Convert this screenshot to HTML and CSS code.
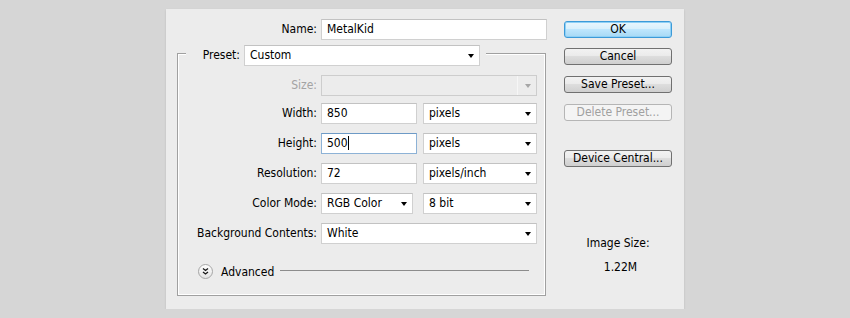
FILE: index.html
```html
<!DOCTYPE html>
<html lang="en">
<head>
  <meta charset="UTF-8">
  <title>New</title>
  <link rel="stylesheet" href="styles.css">
</head>
<body>
  <div class="dialog">
    <div class="main">
      <div class="row name-row">
        <span class="lbl name-lbl">Name:</span>
        <div class="field name-input">MetalKid</div>
      </div>

      <div class="group-head">
        <span class="stub stub-left"></span>
        <span class="lbl preset-lbl">Preset:</span>
        <div class="field select preset-select">Custom<span class="arrow"></span></div>
        <span class="stub stub-right"></span>
      </div>

      <div class="group">
        <div class="row size-row">
          <span class="lbl disabled">Size:</span>
          <div class="field select wide disabled-select"><span class="sep"></span><span class="arrow"></span></div>
        </div>
        <div class="row">
          <span class="lbl">Width:</span>
          <div class="field num">850</div>
          <div class="field select unit">pixels<span class="arrow"></span></div>
        </div>
        <div class="row">
          <span class="lbl">Height:</span>
          <div class="field num focused">500<span class="caret"></span></div>
          <div class="field select unit">pixels<span class="arrow"></span></div>
        </div>
        <div class="row">
          <span class="lbl">Resolution:</span>
          <div class="field num">72</div>
          <div class="field select unit">pixels/inch<span class="arrow"></span></div>
        </div>
        <div class="row">
          <span class="lbl">Color Mode:</span>
          <div class="field select mode">RGB Color<span class="arrow"></span></div>
          <div class="field select bits">8 bit<span class="arrow"></span></div>
        </div>
        <div class="row">
          <span class="lbl">Background Contents:</span>
          <div class="field select wide">White<span class="arrow"></span></div>
        </div>

        <div class="advanced">
          <svg class="adv-icon" width="15" height="15" viewBox="0 0 15 15">
            <defs>
              <linearGradient id="advfill" x1="0" y1="0" x2="0" y2="1">
                <stop offset="0" stop-color="#ffffff"/>
                <stop offset="1" stop-color="#e2e2e2"/>
              </linearGradient>
            </defs>
            <circle cx="7.5" cy="7.5" r="7" fill="url(#advfill)" stroke="#a5a5a5"/>
            <path d="M5 4.5 L7.5 6.5 L10 4.5 M5 8 L7.5 10 L10 8" fill="none" stroke="#1a1a1a" stroke-width="1.3"/>
          </svg>
          <span class="adv-text">Advanced</span>
          <span class="adv-line"></span>
        </div>
      </div>
    </div>

    <div class="side">
      <div class="btn btn-ok">OK</div>
      <div class="btn">Cancel</div>
      <div class="btn">Save Preset...</div>
      <div class="btn btn-disabled">Delete Preset...</div>
      <div class="btn btn-device">Device Central...</div>

      <div class="image-size">
        <div>Image Size:</div>
        <div class="size-value">1.22M</div>
      </div>
    </div>
  </div>
</body>
</html>
```

FILE: styles.css
```css
body {
  margin: 0;
  padding-top: 9px;
  background-color: #d6d6d6;
  font-family: "DejaVu Sans Condensed", "DejaVu Sans", sans-serif;
  font-stretch: condensed;
  font-size: 12px;
  color: #000;
}

.dialog {
  width: 518px;
  height: 300px;
  margin: 0 auto;
  box-sizing: border-box;
  padding-top: 10px;
  display: flex;
  background-color: #ececec;
  box-shadow: 0 1px 2px rgba(0, 0, 0, 0.12);
}

.main {
  width: 381px;
  padding-left: 11px;
  box-sizing: border-box;
}

.row {
  display: flex;
  height: 21px;
  margin-bottom: 9px;
}

.name-row {
  margin-bottom: 5px;
}

.lbl {
  width: 139px;
  text-align: right;
  line-height: 21px;
  margin-right: 4px;
  white-space: nowrap;
}

.name-lbl {
  width: 140px;
}

.lbl.disabled {
  color: #a3a3a3;
}

.field {
  position: relative;
  height: 21px;
  box-sizing: border-box;
  border: 1px solid #d0d0d0;
  border-top-color: #c2c2c2;
  background-color: #fff;
  line-height: 19px;
  padding-left: 5px;
  white-space: nowrap;
}

.name-input {
  width: 226px;
}

.select .arrow {
  position: absolute;
  right: 5px;
  top: 8px;
  border-left: 3px solid transparent;
  border-right: 3px solid transparent;
  border-top: 4px solid #000;
}

/* preset row sits on the group border */
.group-head {
  display: flex;
  width: 369px;
  height: 21px;
}

.stub {
  margin-top: 8px;
  border-top: 1px solid #a0a0a0;
  box-shadow: inset 0 1px 0 #fff;
}

.stub-left {
  width: 8px;
  border-left: 1px solid #a0a0a0;
  box-shadow: inset 1px 1px 0 #fff;
}

.stub-right {
  flex: 1;
  margin-left: 6px;
  border-right: 1px solid #a0a0a0;
  box-shadow: inset -1px 1px 0 #fff;
}

.preset-lbl {
  width: 54px;
}

.preset-select {
  width: 236px;
}

.group {
  width: 369px;
  box-sizing: border-box;
  border: 1px solid #a0a0a0;
  border-top: none;
  box-shadow: inset 1px -1px 0 #fff, inset -1px 0 0 #fff;
  padding-top: 9px;
  padding-bottom: 16px;
}

.size-row {
  margin-bottom: 7px;
}

.wide {
  width: 216px;
}

.disabled-select {
  background-color: #ececec;
  border-color: #cdcdcd;
}

.disabled-select .sep {
  position: absolute;
  right: 18px;
  top: 0;
  bottom: 0;
  border-left: 1px solid #f6f6f6;
}

.disabled-select .arrow {
  border-top-color: #a6a6a6;
}

.num {
  width: 96px;
}

.focused {
  border-color: #8db2d6;
  border-top-color: #6d9ac6;
}

.caret {
  display: inline-block;
  width: 1px;
  height: 14px;
  background-color: #000;
  vertical-align: -3px;
}

.unit {
  width: 114px;
  margin-left: 6px;
}

.mode {
  width: 92px;
}

.bits {
  width: 114px;
  margin-left: 10px;
}

.advanced {
  display: flex;
  align-items: center;
  margin-top: 20px;
  padding-left: 20px;
  padding-right: 16px;
  height: 15px;
}

.adv-text {
  margin-left: 8px;
}

.adv-line {
  flex: 1;
  margin-left: 6px;
  margin-top: -2px;
  border-top: 1px solid #8c8c8c;
}

.side {
  width: 108px;
  margin-left: 17px;
  padding-top: 2px;
}

.btn {
  height: 17px;
  box-sizing: border-box;
  margin-bottom: 11px;
  border: 1px solid #707070;
  border-radius: 3px;
  background: linear-gradient(#f2f2f2 0%, #ebebeb 45%, #dddddd 50%, #cfcfcf 100%);
  text-align: center;
  line-height: 15px;
}

.btn-ok {
  border-color: #3c9ad8;
  box-shadow: inset 0 0 0 1px #8fd0f5;
  background: linear-gradient(#eaf6fd 0%, #d9f0fc 45%, #bee6fd 50%, #a7d9f5 100%);
  margin-bottom: 10px;
}

.btn-disabled {
  border-color: #b5b5b5;
  background: #f4f4f4;
  color: #a0a0a0;
}

.btn-device {
  margin-top: 29px;
}

.image-size {
  margin-top: 64px;
  text-align: center;
  line-height: 24px;
}

.size-value {
  padding-left: 5px;
}
```
